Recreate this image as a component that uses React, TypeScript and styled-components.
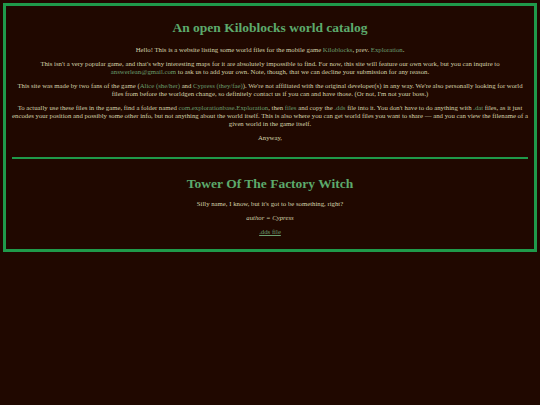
import React from "react";
import styled, { createGlobalStyle } from "styled-components";

const GlobalStyle = createGlobalStyle`
  html, body {
    margin: 0;
    padding: 0;
    background: #200800;
  }
  body {
    padding: 3px;
    font-family: "Liberation Serif", "Times New Roman", serif;
    color: #d4d2aa;
  }
`;

const Frame = styled.main`
  border: 3px solid #1f9a4a;
  padding: 8px 6px 7px;
  text-align: center;
  font-size: 6.75px;
  line-height: 8px;
`;

const Title = styled.h1`
  margin: 6px 0 11px;
  font-size: 13.5px;
  line-height: 15px;
  font-weight: bold;
  color: #5caa6c;
`;

const Para = styled.p<{ $italic?: boolean }>`
  margin: 6px 0;
  font-style: ${(p) => (p.$italic ? "italic" : "normal")};
`;

const Link = styled.a<{ $underline?: boolean }>`
  color: #6a9e6e;
  text-decoration: ${(p) => (p.$underline ? "underline" : "none")};
`;

const Code = styled.span`
  color: #6a9e6e;
`;

const Divider = styled.hr`
  border: none;
  height: 2px;
  background: #1f9a4a;
  margin: 15px 0 17px;
`;

const Heading = styled.h2`
  margin: 0 0 9px;
  font-size: 13.5px;
  line-height: 15px;
  font-weight: bold;
  color: #5caa6c;
`;

const App = () => (
  <>
    <GlobalStyle />
    <Frame>
      <Title>An open Kiloblocks world catalog</Title>
      <Para>
        Hello! This is a website listing some world files for the mobile game <Link>Kiloblocks</Link>, prev.{" "}
        <Link>Exploration</Link>.
      </Para>
      <Para>
        This isn't a very popular game, and that's why interesting maps for it are absolutely impossible to find. For
        now, this site will feature our own work, but you can inquire to <Link>answerlean@gmail.com</Link> to ask us to
        add your own. Note, though, that we can decline your submission for any reason.
      </Para>
      <Para>
        This site was made by two fans of the game (<Link>Alice (she/her)</Link> and <Link>Cypress (they/fae)</Link>).
        We're not affiliated with the original developer(s) in any way. We're also personally looking for world files
        from before the worldgen change, so definitely contact us if you can and have those. (Or not, I'm not your
        boss.)
      </Para>
      <Para>
        To actually use these files in the game, find a folder named <Code>com.explorationbase.Exploration</Code>, then{" "}
        <Code>files</Code> and copy the <Code>.dds</Code> file into it. You don't have to do anything with{" "}
        <Code>.dat</Code> files, as it just encodes your position and possibly some other info, but not anything about
        the world itself. This is also where you can get world files you want to share — and you can view the filename
        of a given world in the game itself.
      </Para>
      <Para>Anyway,</Para>
      <Divider />
      <Heading>Tower Of The Factory Witch</Heading>
      <Para>Silly name, I know, but it's got to be something, right?</Para>
      <Para $italic>author = Cypress</Para>
      <Para>
        <Link $underline>.dds file</Link>
      </Para>
    </Frame>
  </>
);

export default App;
